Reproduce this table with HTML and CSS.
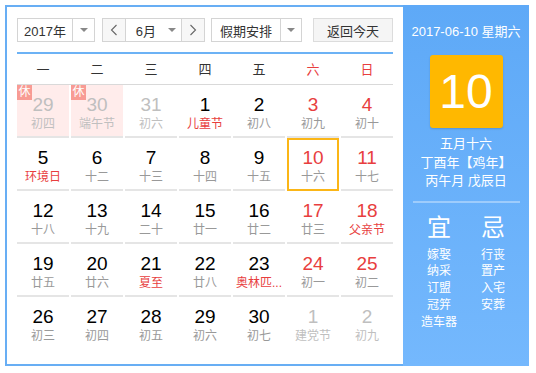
FILE: index.html
```html
<!DOCTYPE html>
<html lang="zh">
<head>
<meta charset="utf-8">
<link rel="stylesheet" href="styles.css">
</head>
<body>
<div class="frame">
  <div class="main">
    <div class="controls">
      <div class="sel year"><span class="sel-text">2017年</span><span class="sel-arrow"><i class="tri"></i></span></div>
      <div class="month-group">
        <span class="nav"><svg width="8" height="12" viewBox="0 0 8 12"><polyline points="6.5,1 1.5,6 6.5,11" fill="none" stroke="#666" stroke-width="1.1"/></svg></span>
        <span class="month"><span class="month-text">6月</span><i class="tri"></i></span>
        <span class="nav"><svg width="8" height="12" viewBox="0 0 8 12"><polyline points="1.5,1 6.5,6 1.5,11" fill="none" stroke="#666" stroke-width="1.1"/></svg></span>
      </div>
      <div class="sel holiday"><span class="sel-text">假期安排</span><span class="sel-arrow"><i class="tri"></i></span></div>
      <div class="today-btn">返回今天</div>
    </div>
    <div class="weekhead">
      <span>一</span><span>二</span><span>三</span><span>四</span><span>五</span><span class="wk">六</span><span class="wk">日</span>
    </div>
    <div class="grid">
      <div class="cell other rest"><i class="badge">休</i><b>29</b><em>初四</em></div>
      <div class="cell other rest"><i class="badge">休</i><b>30</b><em>端午节</em></div>
      <div class="cell other"><b>31</b><em>初六</em></div>
      <div class="cell"><b>1</b><em class="fest">儿童节</em></div>
      <div class="cell"><b>2</b><em>初八</em></div>
      <div class="cell we"><b>3</b><em>初九</em></div>
      <div class="cell we"><b>4</b><em>初十</em></div>

      <div class="cell"><b>5</b><em class="fest">环境日</em></div>
      <div class="cell"><b>6</b><em>十二</em></div>
      <div class="cell"><b>7</b><em>十三</em></div>
      <div class="cell"><b>8</b><em>十四</em></div>
      <div class="cell"><b>9</b><em>十五</em></div>
      <div class="cell we today"><b>10</b><em>十六</em></div>
      <div class="cell we"><b>11</b><em>十七</em></div>

      <div class="cell"><b>12</b><em>十八</em></div>
      <div class="cell"><b>13</b><em>十九</em></div>
      <div class="cell"><b>14</b><em>二十</em></div>
      <div class="cell"><b>15</b><em>廿一</em></div>
      <div class="cell"><b>16</b><em>廿二</em></div>
      <div class="cell we"><b>17</b><em>廿三</em></div>
      <div class="cell we"><b>18</b><em class="fest">父亲节</em></div>

      <div class="cell"><b>19</b><em>廿五</em></div>
      <div class="cell"><b>20</b><em>廿六</em></div>
      <div class="cell"><b>21</b><em class="fest">夏至</em></div>
      <div class="cell"><b>22</b><em>廿八</em></div>
      <div class="cell"><b>23</b><em class="fest">奥林匹...</em></div>
      <div class="cell we"><b>24</b><em>初一</em></div>
      <div class="cell we"><b>25</b><em>初二</em></div>

      <div class="cell last"><b>26</b><em>初三</em></div>
      <div class="cell last"><b>27</b><em>初四</em></div>
      <div class="cell last"><b>28</b><em>初五</em></div>
      <div class="cell last"><b>29</b><em>初六</em></div>
      <div class="cell last"><b>30</b><em>初七</em></div>
      <div class="cell last other"><b>1</b><em>建党节</em></div>
      <div class="cell last other"><b>2</b><em>初九</em></div>
    </div>
  </div>
  <div class="panel">
    <div class="p-date">2017-06-10 星期六</div>
    <div class="p-day">10</div>
    <div class="p-lunar">
      <div>五月十六</div>
      <div>丁酉年【鸡年】</div>
      <div>丙午月 戊辰日</div>
    </div>
    <div class="p-sep"></div>
    <div class="p-yiji">
      <div class="p-col">
        <div class="p-big">宜</div>
        <div class="p-list"><span>嫁娶</span><span>纳采</span><span>订盟</span><span>冠笄</span><span>造车器</span></div>
      </div>
      <div class="p-col">
        <div class="p-big">忌</div>
        <div class="p-list"><span>行丧</span><span>置产</span><span>入宅</span><span>安葬</span></div>
      </div>
    </div>
  </div>
</div>
</body>
</html>
```

FILE: styles.css
```css
* { box-sizing: border-box; }
html, body { margin: 0; padding: 0; background: #fff; }
body {
  font-family: "Liberation Sans", "Noto Sans CJK SC", sans-serif;
  color: #333;
}
.frame {
  margin: 5px 0 0 5px;
  width: 524px;
  height: 361px;
  border: 2px solid #68aef4;
  border-right: none;
  display: flex;
}
.main {
  width: 396px;
  padding: 11px 0 0 10px;
}
.controls {
  display: flex;
  height: 24px;
  align-items: stretch;
  font-size: 13px;
  color: #333;
}
.sel {
  display: flex;
  border: 1px solid #d4d4d4;
  background: #fff;
}
.sel-text {
  display: flex;
  align-items: center;
  justify-content: center;
  border-right: 1px solid #d4d4d4;
}
.sel-arrow {
  display: flex;
  align-items: center;
  justify-content: center;
  flex: 1;
}
.tri {
  display: block;
  width: 0; height: 0;
  border-left: 4px solid transparent;
  border-right: 4px solid transparent;
  border-top: 4px solid #888;
}
.year { width: 78px; }
.year .sel-text { width: 55px; }
.month-group {
  margin-left: 7px;
  width: 103px;
  display: flex;
  border: 1px solid #d4d4d4;
}
.nav {
  width: 22px;
  display: flex;
  align-items: center;
  justify-content: center;
  background: #f7f7f7;
}
.month {
  width: 58px;
  border-left: 1px solid #d4d4d4;
  border-right: 1px solid #d4d4d4;
  display: flex;
  align-items: center;
  padding-left: 10px;
}
.month-text { flex: 1; }
.month .tri { margin-right: 5px; }
.holiday { margin-left: 6px; width: 91px; }
.holiday .sel-text { width: 69px; }
.today-btn {
  margin-left: 11px;
  width: 80px;
  border: 1px solid #dcdcdc;
  background: #f5f5f5;
  display: flex;
  align-items: center;
  justify-content: center;
}
.weekhead {
  margin-top: 10px;
  width: 376px;
  border-top: 2px solid #6cb2f5;
  border-bottom: 1px solid #d9d9d9;
  height: 33px;
  display: grid;
  grid-template-columns: repeat(7, 52px);
  column-gap: 2px;
  align-items: center;
  font-size: 13px;
  color: #333;
}
.weekhead span { text-align: center; padding-bottom: 1px; }
.weekhead .wk { color: #e83e3e; }
.grid {
  width: 376px;
  display: grid;
  grid-template-columns: repeat(7, 52px);
  column-gap: 2px;
}
.cell {
  position: relative;
  height: 53px;
  border-bottom: 2px solid #e5e5e5;
  display: flex;
  flex-direction: column;
  align-items: center;
  padding-top: 10px;
}
.cell.last { border-bottom-color: transparent; }
.cell b {
  font-weight: normal;
  font-size: 19px;
  line-height: 20px;
  color: #000;
}
.cell em {
  font-style: normal;
  font-size: 12px;
  line-height: 16px;
  margin-top: 1px;
  color: #999;
  white-space: nowrap;
}
.cell em.fest { color: #e83e3e; }
.cell.we b { color: #e83e3e; }
.cell.other b, .cell.other em { color: #bfbfbf; }
.cell.rest { background: #ffeceb; }
.badge {
  position: absolute;
  left: 0; top: 0;
  width: 15px; height: 15px;
  background: #f89b94;
  color: #fff;
  font-style: normal;
  font-size: 12px;
  line-height: 15px;
  text-align: center;
}
.cell.today {
  border: 2px solid #fbb617;
  padding-top: 8px;
}
.panel {
  width: 126px;
  margin: -2px 0;
  background: linear-gradient(#5ea9f7, #74b8fd);
  color: #fff;
  display: flex;
  flex-direction: column;
  align-items: center;
}
.p-date {
  margin-top: 18px;
  font-size: 13px;
  line-height: 18px;
}
.p-day {
  margin-top: 14px;
  width: 73px;
  height: 73px;
  background: #ffb800;
  border-radius: 3px;
  box-shadow: 0 1px 2px rgba(0,0,0,0.15);
  font-size: 48px;
  line-height: 73px;
  text-align: center;
}
.p-lunar {
  margin-top: 7px;
  font-size: 13px;
  line-height: 18.5px;
  text-align: center;
}
.p-sep {
  margin-top: 10px;
  width: 107px;
  height: 2px;
  background: rgba(255,255,255,0.35);
}
.p-yiji {
  margin-top: 10px;
  display: flex;
  gap: 22px;
}
.p-col {
  width: 32px;
  display: flex;
  flex-direction: column;
  align-items: center;
}
.p-big {
  font-size: 24px;
  line-height: 30px;
}
.p-list {
  margin-top: 4px;
  display: flex;
  flex-direction: column;
  align-items: center;
  font-size: 12px;
  line-height: 16.75px;
}
.p-list span { white-space: nowrap; }
```
